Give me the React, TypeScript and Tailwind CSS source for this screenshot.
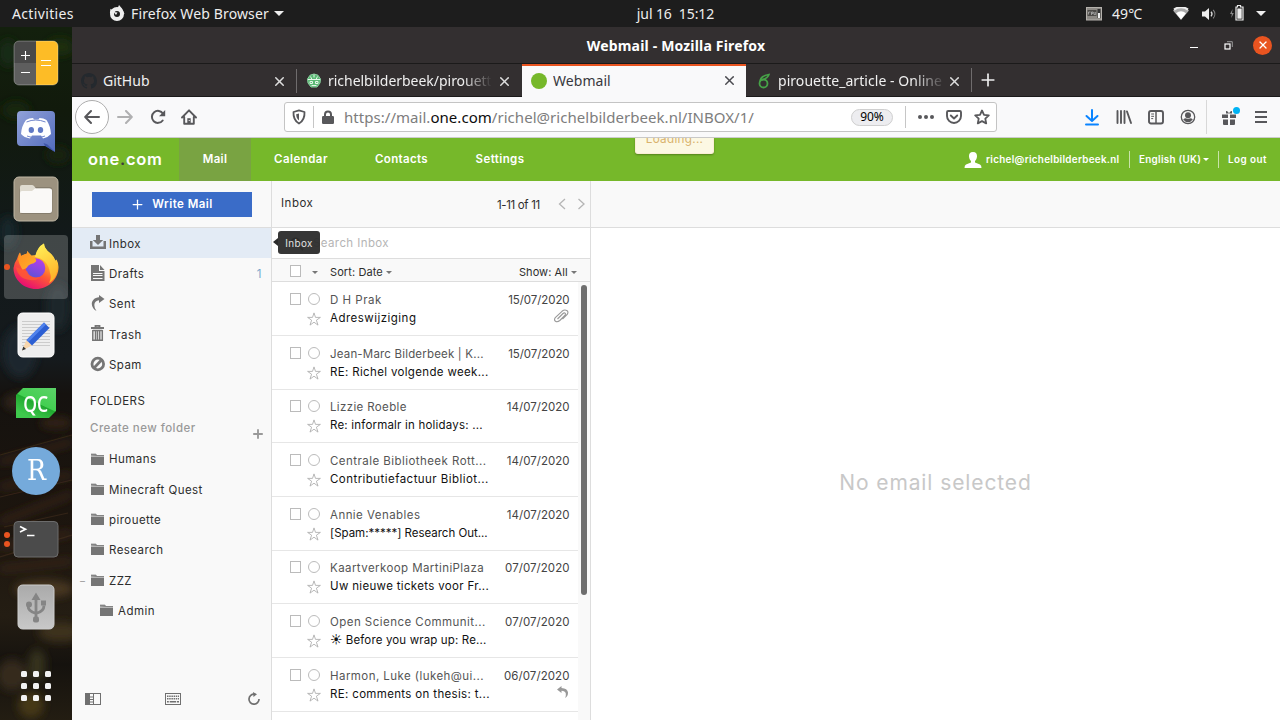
import React from "react";
import { Plus, X } from "lucide-react";

const ui = "font-['Noto_Sans','Open_Sans',sans-serif]";

function Caret({ className = "" }: { className?: string }) {
  return (
    <svg viewBox="0 0 10 5" className={className} fill="currentColor">
      <path d="M0 0h10L5 5z" />
    </svg>
  );
}

/* ---------- Desktop top bar ---------- */

function TopBar() {
  return (
    <div className={`flex h-[27px] shrink-0 items-center bg-[#1d1d1d] text-[14px] leading-[27px] text-[#eeeeee] ${ui}`}>
      <span className="ml-3 w-[97px] tracking-[0.35px]">Activities</span>
      <svg viewBox="0 0 16 16" className="-mt-[2px] size-4 shrink-0" fill="none">
        <circle cx="8" cy="9" r="5" stroke="#eee" strokeWidth="4" />
        <path d="M.9 8 1.500 3.800 3.300 5 5 3.800l1 2.700-3 3zM8.500 3.500 10 0l3 3.500L15.500 9l-4-1z" fill="#eee" />
        <path d="M4.500 7l4 .5L7 10z" fill="#eee" />
      </svg>
      <span className="ml-[6px] w-[143px] whitespace-nowrap tracking-[0.13px]">Firefox Web Browser</span>
      <Caret className="h-[5px] w-[10px] shrink-0" />
      <span className="ml-[352px] w-[79px] whitespace-pre text-center tracking-[-0.1px]">jul 16  15:12</span>
      <svg viewBox="0 0 16 14" className="ml-[371px] h-[14px] w-4 shrink-0">
        <rect x=".5" y=".5" width="15" height="12.5" fill="#8d8a85" stroke="#b5b2ad" />
        <rect x="1.5" y="3" width="9" height="6" fill="#4c4a47" />
        <path d="M2.5 7.5V5h2M5.500 8V5h1.600v1.400H5.500M8 5v2.600h1.700V5" stroke="#bbb" strokeWidth=".7" fill="none" />
        <rect x="11.5" y="2" width="3" height="9" fill="#333" />
        <rect x="12" y="6" width="2" height="5" fill="#eee" />
      </svg>
      <span className="ml-[10px] w-[33px] tracking-[0.1px]">49℃</span>
      <svg viewBox="0 0 16 13" className="ml-[28px] h-[13px] w-4 shrink-0">
        <path d="M0 3.6A12 12 0 0 1 16 3.6L8 13z" fill="#aaa" />
        <path d="M1 2.6A11.5 11.5 0 0 1 15 2.6" stroke="#eee" strokeWidth="2" fill="none" />
        <path d="M3 6.2a8 8 0 0 1 10 0L8 12.5z" fill="#fff" />
      </svg>
      <svg viewBox="0 0 16 14" className="ml-[12px] h-[14px] w-4 shrink-0" fill="none">
        <path d="M1 4.500h3L8 1v12L4 9.500H1z" fill="#eee" />
        <path d="M10 4.800a3.500 3.500 0 0 1 0 4.600" stroke="#ddd" strokeWidth="1.300" />
        <path d="M12.200 2.800a6.500 6.500 0 0 1 0 8.600" stroke="#888" strokeWidth="1.100" />
      </svg>
      <svg viewBox="0 0 14 16" className="-mt-[2px] ml-[13px] h-4 w-[14px] shrink-0">
        <path d="M2.600 4 0 9h1.800L1.300 13l2.500-5H2z" fill="#888" />
        <path d="M6 2h1.500V.5h3V2H13v13H6z" fill="none" stroke="#eee" strokeWidth="1.200" />
        <path d="M7.300 3.500h4.400v10.200H7.300z" fill="#eee" />
      </svg>
      <Caret className="ml-[12px] h-[5px] w-[10px] shrink-0" />
    </div>
  );
}

/* ---------- Dock ---------- */

function DockItem({ children, dots = 0, active = false }: { children: React.ReactNode; dots?: number; active?: boolean }) {
  return (
    <div className={`relative flex size-16 shrink-0 items-center justify-center rounded-[4px] ${active ? "bg-white/20" : ""}`}>
      {dots > 0 && (
        <div className="absolute top-0 left-0 flex h-full w-[6px] flex-col items-center justify-center gap-[3px]">
          {Array.from({ length: dots }, (_, i) => (
            <span key={i} className="size-[6px] rounded-full bg-[#e95420]" />
          ))}
        </div>
      )}
      {children}
    </div>
  );
}

function DockBackdrop() {
  return (
    <svg viewBox="0 0 72 693" className="absolute inset-0 h-full w-full" preserveAspectRatio="none">
      <defs>
        <linearGradient id="wood" x2="0" y2="1">
          <stop offset="0" stopColor="#13200d" />
          <stop offset=".12" stopColor="#111a0c" />
          <stop offset=".3" stopColor="#12191a" />
          <stop offset=".48" stopColor="#151a1d" />
          <stop offset=".53" stopColor="#15120f" />
          <stop offset=".7" stopColor="#1c150e" />
          <stop offset=".85" stopColor="#241d13" />
          <stop offset=".92" stopColor="#15120e" />
          <stop offset="1" stopColor="#231d12" />
        </linearGradient>
        <filter id="haze" x="-30%" y="-30%" width="160%" height="160%">
          <feGaussianBlur stdDeviation="4" />
        </filter>
      </defs>
      <rect width="72" height="693" fill="url(#wood)" />
      <g filter="url(#haze)">
        <ellipse cx="60" cy="20" rx="14" ry="9" fill="#1b2f11" />
        <ellipse cx="8" cy="26" rx="10" ry="14" fill="#182a12" />
        <ellipse cx="16" cy="83" rx="14" ry="9" fill="#172610" />
        <ellipse cx="58" cy="128" rx="12" ry="9" fill="#16200f" />
        <ellipse cx="8" cy="205" rx="9" ry="16" fill="#18272b" />
        <ellipse cx="58" cy="280" rx="12" ry="24" fill="#1a262b" />
        <ellipse cx="20" cy="325" rx="17" ry="26" fill="#1a272d" />
        <ellipse cx="22" cy="375" rx="18" ry="9" fill="#33261b" />
        <ellipse cx="56" cy="396" rx="16" ry="6" fill="#332318" />
        <path d="M0 435 72 415M0 460l72-12M0 495l72-28M0 520l72-14M0 542l72-8" stroke="#3b281a" strokeWidth="5" />
        <ellipse cx="44" cy="562" rx="30" ry="9" fill="#4a3720" />
        <ellipse cx="60" cy="605" rx="22" ry="10" fill="#3c301d" />
        <ellipse cx="12" cy="648" rx="15" ry="16" fill="#352c1d" />
        <ellipse cx="37" cy="638" rx="9" ry="16" fill="#36301e" />
        <ellipse cx="31" cy="678" rx="13" ry="13" fill="#453718" />
      </g>
      <path d="M0 428 72 408M0 470 72 453M4 500 68 486M0 530l72-22" stroke="#4b3320" strokeWidth="1.200" opacity=".5" />
    </svg>
  );
}

function Dock() {
  return (
    <div className="relative w-[72px] shrink-0 overflow-hidden">
      <DockBackdrop />
      <div className="relative flex flex-col items-center gap-1 pt-1">
        <DockItem>
          <svg viewBox="0 0 46 46" className="size-[46px]">
            <defs>
              <clipPath id="calc">
                <rect x="1" y="1" width="44" height="44" rx="5" />
              </clipPath>
            </defs>
            <g clipPath="url(#calc)">
              <path d="M0 0h23v23H0z" fill="#494949" />
              <path d="M0 23h23v23H0z" fill="#5e5e5e" />
              <path d="M23 0h23v46H23z" fill="#fdbc26" />
            </g>
            <rect x="1" y="1" width="44" height="44" rx="5" fill="none" stroke="#fff" strokeOpacity=".3" />
            <path d="M8 15.500h9M12.500 11v9M8 32.500h9M28 20.500h10M28 25.500h10" stroke="#fff" strokeWidth="1.100" />
          </svg>
        </DockItem>
        <DockItem>
          <svg viewBox="0 0 38 42" className="h-[42px] w-[38px]">
            <defs>
              <linearGradient id="disc" x2="1" y2="1">
                <stop stopColor="#91a2d8" />
                <stop offset="1" stopColor="#526bbd" />
              </linearGradient>
            </defs>
            <path d="M4 1h30a4 4 0 0 1 4 4v37l-9-6H4a4 4 0 0 1-4-4V5a4 4 0 0 1 4-4z" fill="url(#disc)" />
            <path d="M28 36l-1.500-3 4 1.500L38 42z" fill="#3e55a8" />
            <path d="M9 10q3-2 7-2l1 1.500h4.500L22.500 8q4 0 7 2 4 6 4.500 14-3 3.500-8 4.500l-2-3h-9l-2 3q-6-1-9-4.500Q4.500 16 9 10z" fill="#fff" />
            <ellipse cx="14.300" cy="20" rx="2.700" ry="2.900" fill="#6079c4" />
            <ellipse cx="23.500" cy="20" rx="2.700" ry="2.900" fill="#6079c4" />
            <path d="M9.500 12q9-4 19 0M10 26q9 3.500 18 0" fill="none" stroke="#7085cb" strokeWidth="1" />
          </svg>
        </DockItem>
        <DockItem>
          <svg viewBox="0 0 46 46" className="size-[46px]">
            <rect x="1" y="1" width="44" height="44" rx="5" fill="#9c927f" stroke="#c0b7a5" />
            <rect x="6.500" y="11" width="33" height="27" rx="3" fill="#776f60" opacity=".6" />
            <path d="M7 37V11q0-2 2-2h10q1 0 2 1l2 2.500h13q2 0 2 2V36z" fill="#dfdbd0" />
            <path d="M7 17q0-2 2-2h10l3-2.500h15q2 0 2 2v20q0 2.500-2.500 2.500h-27Q7 37 7 34.500z" fill="#faf9f7" />
          </svg>
        </DockItem>
        <DockItem dots={1} active>
          <svg viewBox="0 0 46 48" className="-mt-[2px] h-12 w-[46px]">
            <defs>
              <linearGradient id="fx1" x1=".8" x2=".25" y2="1">
                <stop offset=".05" stopColor="#fff04b" />
                <stop offset=".35" stopColor="#ffb22c" />
                <stop offset=".6" stopColor="#ff5c32" />
                <stop offset="1" stopColor="#e4047b" />
              </linearGradient>
              <linearGradient id="fx2" x1="0" x2="1" y2="1">
                <stop stopColor="#ff8c22" />
                <stop offset="1" stopColor="#ffb229" />
              </linearGradient>
              <linearGradient id="fx3" x1=".7" x2=".3" y2="1">
                <stop stopColor="#b83dea" />
                <stop offset="1" stopColor="#5d52d8" />
              </linearGradient>
              <linearGradient id="fx4" x2=".3" y2="1">
                <stop stopColor="#fff35a" />
                <stop offset="1" stopColor="#ffb52b" />
              </linearGradient>
            </defs>
            <path d="M4 17Q5.500 12 7 10.500l1 3.500q3-2 6-2.500V9l4.500 4.500L23 13Q25 5 31 1.500q0 5 6 9.500 4 3 5 8l1.500-1.500Q45.500 21 45.500 25c0 12-10 22-22.500 22S.5 37.500.5 26Q1 21 4 17z" fill="url(#fx1)" />
            <circle cx="22.500" cy="26" r="9.800" fill="url(#fx3)" />
            <path d="M22 15Q24 5 31 1.500q0 5 6 9.500 8 7 7 18-1 8-8 12 3-5 1-10Q35 17 22 15z" fill="url(#fx4)" />
            <path d="M5 17l2-6.500L8 14l6-2.500V9l4.500 5.500Q24 16 23 19.500q-2 2-5 2.500-3 .8-4.500 4l-4 2-3-6z" fill="url(#fx2)" />
            <path d="M3 25q2 12 14 13 7 1 10-3-10 2-13-6z" fill="#ff5a32" opacity=".8" />
          </svg>
        </DockItem>
        <DockItem>
          <svg viewBox="0 0 38 46" className="h-[46px] w-[38px]">
            <rect x="1" y="1" width="36" height="44" rx="4.500" fill="#eee" stroke="#fff" />
            <path d="M5 9.500h28M5 12.500h28M5 15.500h28M5 18.500h28M5 21.500h28M5 24.500h28M5 27.500h28M5 30.500h28M5 33.500h28" stroke="#ccc" strokeWidth="1" />
            <path d="M9.500 28l5.500 5.500-10 5z" fill="#f8d6ac" />
            <path d="M5 38.500l1.300-4 2.700 2.500z" fill="#333" />
            <path d="M9.500 28 27 10.500l5.500 5.500L15 33.500z" fill="#2c5fd3" />
            <path d="M9.500 28 27 10.500l2 2L11.500 30z" fill="#4f82ec" />
          </svg>
        </DockItem>
        <DockItem>
          <div className="flex h-[30px] w-[40px] items-center justify-center bg-[linear-gradient(205deg,#5cd268_0%,#43cf51_48%,#20a92f_50%,#3fc94d_85%)] text-[22px] leading-none text-white [clip-path:polygon(7px_0,100%_0,100%_23px,33px_100%,0_100%,0_7px)] [font-family:'Open_Sans',sans-serif] font-semibold">
            <span className="scale-x-80">QC</span>
          </div>
        </DockItem>
        <DockItem>
          <div className="flex size-12 items-center justify-center rounded-full bg-[#75aadb] pl-[2px] text-[28px] leading-none text-white [font-family:'DejaVu_Serif',serif]">
            <span className="scale-x-90">R</span>
          </div>
        </DockItem>
        <DockItem dots={2}>
          <svg viewBox="0 0 46 38" className="h-[38px] w-[46px]">
            <rect x="1" y="1.500" width="44" height="35.500" rx="4" fill="#4b4b4b" stroke="#6c6c6c" />
            <path d="M7 6.500l5.500 2.700L7 12" fill="none" stroke="#fff" strokeWidth="1.700" />
            <path d="M14 15.500h7.500" stroke="#fff" strokeWidth="1.500" />
          </svg>
        </DockItem>
        <DockItem>
          <svg viewBox="0 0 38 46" className="h-[46px] w-[38px]">
            <defs>
              <linearGradient id="usb" x2="0" y2="1">
                <stop stopColor="#aaa" />
                <stop offset="1" stopColor="#c8c8c8" />
              </linearGradient>
            </defs>
            <rect x="1" y="1" width="36" height="44" rx="4.500" fill="url(#usb)" stroke="#ccc" />
            <g stroke="#858585" strokeWidth="2.800" fill="none">
              <path d="M19 13v22M19 29.500q-8-2-8-8M19 29.500q8-2 8-8" />
            </g>
            <g fill="#858585">
              <path d="M14.500 16 19 8.500l4.500 7.500zM24 16.500h5v5h-5z" />
              <circle cx="12" cy="20.500" r="3" />
              <rect x="16" y="32.500" width="6" height="6" rx="2" />
            </g>
          </svg>
        </DockItem>
      </div>
      <div className="relative mt-[32px] ml-[21px] grid w-[30px] grid-cols-3 gap-[6px]">
        {Array.from({ length: 9 }, (_, i) => (
          <span key={i} className="size-[6px] rounded-[1.500px] bg-[#f2f2f2]" />
        ))}
      </div>
    </div>
  );
}

/* ---------- Browser chrome ---------- */

function TitleBar() {
  return (
    <div className={`flex h-[37px] items-center border-b border-[#1b1a1a] bg-[#332f30] ${ui}`}>
      <span className="ml-[504px] w-[200px] text-center text-[14px] font-bold tracking-[0.17px] whitespace-nowrap text-white">Webmail - Mozilla Firefox</span>
      <span className="mt-1 ml-[414px] h-px w-2 bg-white" />
      <svg viewBox="0 0 9 9" className="ml-[26px] size-[9px]" fill="none">
        <rect x="1" y="3" width="5" height="5" stroke="#fff" strokeWidth="1.200" />
        <path d="M3 .7h5.300V6" stroke="#999" />
      </svg>
      <span className="ml-[20px] flex size-[19px] items-center justify-center rounded-full bg-[#e95420] text-white">
        <X size={12} strokeWidth={2.600} />
      </span>
    </div>
  );
}

function Tab({ icon, title, className, textClass = "", active = false }: { icon: React.ReactNode; title: string; className: string; textClass?: string; active?: boolean }) {
  return (
    <div className={`flex items-center ${className} ${active ? "border-t-2 border-[#e95420] bg-[#f9f9fa] pb-[2px] text-[#38383d]" : "text-[#f0f0f0]"}`}>
      <span className="flex size-4 shrink-0 items-center justify-center">{icon}</span>
      <span className={`ml-[6px] w-[164px] shrink-0 overflow-hidden text-[14px] leading-5 whitespace-nowrap ${textClass}`}>{title}</span>
      <X size={15} strokeWidth={2.400} className={`ml-[5px] shrink-0 ${active ? "text-[#4a4a4f]" : "text-[#dedede]"}`} />
    </div>
  );
}

function Tabs() {
  return (
    <div className={`flex h-[33px] bg-[#332f30] ${ui}`}>
      <div className="flex flex-1 [&>*]:h-full">
        <Tab
          className="w-[224px] border-b border-[#1b1a1a] pt-[2px] pl-[9px]"
          title="GitHub"
          textClass="tracking-[0px]"
          icon={
            <svg viewBox="0 0 16 16" className="size-4" fill="#24292e">
              <path d="M8 0C3.580 0 0 3.580 0 8c0 3.540 2.290 6.530 5.470 7.590.4.070.55-.17.55-.38 0-.19-.01-.82-.01-1.490-2.010.37-2.530-.49-2.690-.94-.09-.23-.48-.94-.82-1.130-.28-.15-.68-.52-.01-.53.63-.01 1.080.58 1.230.82.72 1.210 1.870.87 2.330.66.07-.52.28-.87.51-1.070-1.780-.2-3.640-.89-3.640-3.950 0-.87.31-1.590.82-2.150-.08-.2-.36-1.020.08-2.120 0 0 .67-.21 2.200.82a7.500 7.500 0 0 1 4 0c1.530-1.040 2.200-.82 2.200-.82.44 1.100.16 1.920.08 2.120.51.56.82 1.270.82 2.150 0 3.070-1.870 3.750-3.650 3.950.29.25.54.73.54 1.480 0 1.070-.01 1.930-.01 2.200 0 .21.15.46.55.38A8 8 0 0 0 16 8c0-4.420-3.580-8-8-8z" />
            </svg>
          }
        />
        <Tab
          className="w-[226px] border-b border-[#1b1a1a] pt-[2px] pl-[10px] before:-ml-[10px] before:mr-[9px] before:h-[24px] before:w-px before:bg-[#6f6c6d]"
          title="richelbilderbeek/pirouette"
          textClass="tracking-[-0.03px] [mask-image:linear-gradient(to_right,black_135px,transparent_164px)]"
          icon={
            <svg viewBox="0 0 16 16" className="size-4" fill="none">
              <path d="M4 2.200 8 1l4 1.200L14.500 6 14 10l-3 4H5l-3-4L1.500 6z" fill="#5bb974" stroke="#8bd09f" />
              <path d="M2 6.500h12M4.500 3.500 6 6.500M11.500 3.500 10 6.500M8 1.500v3M4 8.500h2.500v2H4zM9.500 8.500H12v2H9.500zM5.500 12.500h5" stroke="#e5f6ea" />
            </svg>
          }
        />
        <Tab active className="w-[224px] pl-[9px]" title="Webmail" textClass="tracking-[0.05px]" icon={<span className="size-4 rounded-full bg-[#76b82a]" />} />
        <Tab
          className="w-[224px] border-b border-[#1b1a1a] pt-[2px] pl-[10px]"
          title="pirouette_article - Online"
          textClass="tracking-[0.05px] [mask-image:linear-gradient(to_right,black_135px,transparent_168px)]"
          icon={
            <svg viewBox="0 0 16 16" className="size-4" fill="none" stroke="#46a247">
              <circle cx="7.500" cy="10.500" r="4" strokeWidth="1.800" />
              <path d="M4 9q0-6 9-7.500Q12 5 6 7" strokeWidth="1.600" />
            </svg>
          }
        />
        <div className="flex flex-1 items-center border-b border-[#1b1a1a]">
          <span className="ml-[1px] h-[24px] w-px bg-[#6f6c6d]" />
          <Plus size={20} strokeWidth={2} className="ml-[6px] text-[#eee]" />
        </div>
      </div>
    </div>
  );
}

function AddressBar() {
  return (
    <div className="flex h-[30px] w-[713px] items-center rounded-[3px] border border-[#c4c4c4] bg-white text-[#58585b]">
      <svg viewBox="0 0 16 16" className="ml-[6px] size-4 shrink-0" fill="none" stroke="currentColor" strokeWidth="1.800">
        <path d="M8 1.400 13.500 3q.5 8-5.500 11.600Q2 11 2.500 3z" strokeLinejoin="round" />
        <path d="M8 4.500v7Q5.200 9.500 5.200 5.300z" fill="currentColor" stroke="none" />
      </svg>
      <span className="ml-[6px] h-[22px] w-px bg-[#c6c6c6]" />
      <svg viewBox="0 0 12 14" className="ml-[8px] h-[14px] w-3 shrink-0">
        <path d="M3 7V4.500a3 3 0 0 1 6 0V7" stroke="currentColor" strokeWidth="2" fill="none" />
        <rect y="6" width="12" height="8" rx="1.200" fill="currentColor" />
      </svg>
      <span className="ml-[10px] w-[507px] text-[15px] tracking-[0.04px] whitespace-nowrap text-[#7d7d7d]">
        https://mail.<span className="text-[#0c0c0d]">one.com</span>/richel@richelbilderbeek.nl/INBOX/1/
      </span>
      <span className="flex h-[17px] w-[42px] items-center justify-center rounded-full border border-[#cfcfcf] bg-[#ededf0] text-[12px] tracking-[-0.1px] text-black">90%</span>
      <span className="ml-[12px] h-[22px] w-px bg-[#c6c6c6]" />
      <svg viewBox="0 0 16 4" className="ml-[12px] h-1 w-4 shrink-0" fill="currentColor">
        <circle cx="2" cy="2" r="2" />
        <circle cx="8" cy="2" r="2" />
        <circle cx="14" cy="2" r="2" />
      </svg>
      <svg viewBox="0 0 16 16" className="ml-[12px] size-4 shrink-0" fill="none" stroke="currentColor" strokeWidth="1.900" strokeLinecap="round" strokeLinejoin="round">
        <path d="M2.200 2h11.600q1.200 0 1.200 1.200V7A7 7 0 0 1 1 7V3.200Q1 2 2.200 2z" />
        <path d="M4.800 6.500 8 9.500l3.200-3" />
      </svg>
      <svg viewBox="0 0 16 16" className="ml-[12px] size-4 shrink-0" fill="none" stroke="currentColor" strokeWidth="1.800" strokeLinejoin="round">
        <path d="m8 1.500 2 4.300 4.800.6-3.500 3.300.9 4.700L8 12.100l-4.200 2.300.9-4.700L1.200 6.400 6 5.800z" />
      </svg>
    </div>
  );
}

function Toolbar() {
  return (
    <div className={`flex h-[41px] items-center border-b border-[#cccccc] bg-[#f9f9fa] text-[#58585b] ${ui}`}>
      <span className="ml-[3px] flex size-[34px] items-center justify-center rounded-full border border-[#adadad] bg-white">
        <svg viewBox="0 0 16 16" className="size-4" fill="none" stroke="currentColor" strokeWidth="2" strokeLinecap="round" strokeLinejoin="round">
          <path d="M15 8H1.500M7 2 1.200 8 7 14" />
        </svg>
      </span>
      <svg viewBox="0 0 16 16" className="ml-[8px] size-4 opacity-45" fill="none" stroke="currentColor" strokeWidth="2" strokeLinecap="round" strokeLinejoin="round">
        <path d="M1 8h13.500M9 2l5.800 6L9 14" />
      </svg>
      <svg viewBox="0 0 16 16" className="ml-[17px] size-4" fill="none" stroke="currentColor" strokeWidth="2" strokeLinecap="round">
        <path d="M12.700 11.500A6 6 0 1 1 13 4.700" />
        <path d="M15.200 1v6.200H9z" fill="currentColor" stroke="none" />
      </svg>
      <svg viewBox="0 0 16 16" className="ml-[15px] size-4" fill="none" stroke="currentColor" strokeWidth="1.900" strokeLinecap="round" strokeLinejoin="round">
        <path d="M1 8.500 8 1.300l7 7.200M3.200 8v6.800h9.600V8" />
        <path d="M6.300 9.200h3.400v5.600H6.300z" fill="currentColor" stroke="none" />
        <path d="M8.200 11.500h.1" stroke="#f9f9fa" strokeWidth="1.200" />
      </svg>
      <div className="ml-[87px]">
        <AddressBar />
      </div>
      <svg viewBox="0 0 16 18" className="ml-[87px] h-[18px] w-4" fill="none" stroke="#0a84ff" strokeWidth="2" strokeLinecap="round" strokeLinejoin="round">
        <path d="M8 2v10.500M2.500 8 8 13l5.500-5M2 16.500h12" />
      </svg>
      <svg viewBox="0 0 16 16" className="ml-[16px] size-4" stroke="currentColor" strokeWidth="1.900" strokeLinecap="round">
        <path d="M1.500 2v12M5 2v12M8.500 2v12M11 2.500l4 11.500" />
      </svg>
      <svg viewBox="0 0 16 16" className="ml-[16px] size-4" fill="none" stroke="currentColor" strokeWidth="1.900">
        <rect x="1" y="2" width="14" height="12.500" rx="2" />
        <path d="M8 2v12" strokeWidth="1.500" />
        <path d="M3.200 5h2.800M3.200 7.300h2.800M3.200 9.600h2" strokeWidth="1" />
      </svg>
      <svg viewBox="0 0 16 16" className="ml-[16px] size-4" fill="none" stroke="currentColor">
        <circle cx="8" cy="8" r="6.700" strokeWidth="1.300" />
        <circle cx="8" cy="6.200" r="3" fill="currentColor" stroke="none" />
        <path d="M3.200 10.500q1-1.200 2.800-1.200 2 1 4 0 1.800 0 2.800 1.200-2 2.700-4.800 2.700T3.200 10.500z" fill="currentColor" stroke="none" />
      </svg>
      <span className="ml-[10px] h-[34px] w-px bg-[#d8d8d8]" />
      <span className="relative ml-[14px] size-4">
        <svg viewBox="0 0 16 16" className="size-4" fill="currentColor">
          <path d="M1 5.500h6V9H1zM9 5.500h6V9H9zM2 10.500h5V16H3q-1 0-1-1zM9 10.500h5V15q0 1-1 1H9z" />
          <path d="M5 2q2-.5 3 2.500Q9 1.500 11 2v2.500H5z" />
        </svg>
        <span className="absolute -top-[2px] left-[12px] size-[7px] rounded-full bg-[#00b3f4]" />
      </span>
      <svg viewBox="0 0 14 12" className="ml-[17px] h-3 w-[14px]" stroke="currentColor" strokeWidth="2">
        <path d="M1 1h12M1 6h12M1 11h12" />
      </svg>
    </div>
  );
}

/* ---------- Webmail ---------- */

function Header() {
  return (
    <header className="relative flex h-[43px] shrink-0 items-center bg-[#76b82a] text-[11.500px] font-semibold text-white">
      <span className="ml-[16px] w-[91px] text-[16.500px] leading-none font-semibold tracking-[0.700px]">
        one<span className="text-[#3c3c3b]">.</span>com
      </span>
      <span className="flex h-full w-[72px] items-center justify-center bg-[#79a342] pt-px tracking-[0.300px]">Mail</span>
      <span className="w-[100px] pt-px text-center tracking-[0.450px]">Calendar</span>
      <span className="w-[101px] pt-px text-center tracking-[0.350px]">Contacts</span>
      <span className="w-[96px] pt-px text-center tracking-[0.400px]">Settings</span>
      <div className="ml-auto flex items-center text-[9.900px]">
        <svg viewBox="0 0 18 16" className="h-4 w-[18px]" fill="white">
          <path d="M9 0c3 0 4.200 2 4 4.500-.2 2-1 3.500-2 4.500v1.500l5 2q1.500.7 1.500 3.500h-17q0-2.800 1.500-3.500l5-2V9C6 8 5.200 6.500 5 4.500 4.800 2 6 0 9 0z" />
        </svg>
        <span className="ml-[4px] w-[134px] tracking-[0.280px] whitespace-nowrap">richel@richelbilderbeek.nl</span>
        <span className="ml-[9px] h-[17px] w-px bg-white/60" />
        <span className="ml-[9px] w-[62px] tracking-[0.280px] whitespace-nowrap">English (UK)</span>
        <Caret className="ml-[2px] h-[3px] w-[6px]" />
        <span className="ml-[9px] h-[17px] w-px bg-white/60" />
        <span className="mr-[13px] ml-[9px] w-[39px] tracking-[0.430px] whitespace-nowrap">Log out</span>
      </div>
      <div className="absolute top-0 left-[563px] flex h-[16px] w-[79px] justify-center overflow-hidden rounded-b-[3px] border border-t-0 border-[#fbeed5] bg-[#fcf8e3] text-[11.700px] leading-[3px] font-normal tracking-[0.300px] text-[#d9b26c] shadow-[0_1px_2px_rgba(0,0,0,.3)]">
        <span>Loading...</span>
      </div>
    </header>
  );
}

const mailboxes = [
  {
    name: "Inbox",
    icon: (
      <svg viewBox="0 0 16 16" className="size-4" fill="currentColor">
        <path d="M6 1h4v5h3.200L8 11 2.800 6H6zM0 7h2.500v5.500h11V7H16v8H0z" />
      </svg>
    ),
  },
  {
    name: "Drafts",
    count: 1,
    icon: (
      <svg viewBox="0 0 16 16" className="size-4">
        <path d="M1 0h8v6h5.500v10H1z" fill="currentColor" />
        <path d="M10 0l4.500 5H10z" fill="currentColor" />
        <path d="M3 8.500h9.500M3 10.500h9.500M3 13.500h9.500" stroke="#f9f9f9" />
      </svg>
    ),
  },
  {
    name: "Sent",
    icon: (
      <svg viewBox="0 0 16 16" className="size-4" fill="currentColor">
        <path d="M9 0v2.200C4.500 2.500 1.800 5.500 1.800 9q.2 4.500 4.700 7-2.300-3-2.200-6 .3-4.300 4.700-4.700V8l5.500-4z" />
      </svg>
    ),
  },
  {
    name: "Trash",
    icon: (
      <svg viewBox="0 0 16 16" className="size-4" fill="none" stroke="currentColor" strokeWidth="1.500">
        <path d="M5.500 2V.8h4V2M1 3h13" strokeWidth="1.800" />
        <path d="M2.800 5v10.200h9.500V5M2.800 5.500h9.500M5.500 6v9M7.500 6v9M9.700 6v9" />
      </svg>
    ),
  },
  {
    name: "Spam",
    icon: (
      <svg viewBox="0 0 16 16" className="size-4" fill="none" stroke="currentColor" strokeWidth="2.800">
        <circle cx="7.800" cy="8" r="5.800" />
        <path d="M4 12 11.500 4" />
      </svg>
    ),
  },
];

function FolderIcon() {
  return (
    <svg viewBox="0 0 13 12" className="h-3 w-[13px] shrink-0">
      <path d="M0 4h13v8H0z" fill="#757575" />
      <path d="M0 .8h5l1 1.200h7v2H0z" fill="#b5b5b5" />
      <path d="M0 2.200V.8h4.800l1 1.200H13v.9H5.500z" fill="#858585" />
    </svg>
  );
}

function Sidebar() {
  return (
    <aside className="flex w-[200px] shrink-0 flex-col border-r border-[#dddddd] bg-[#f9f9f9] text-[11.500px] tracking-[0.450px] text-[#2d2d2d]">
      <div className="flex h-[47px] shrink-0 items-center justify-center border-b border-[#dddddd]">
        <button className="flex h-[25px] w-[160px] items-center justify-center bg-[#3a6cc8] pt-px font-semibold text-white">
          <Plus size={15} strokeWidth={2} className="mr-[7px]" />
          <span className="w-[62px] whitespace-nowrap">Write Mail</span>
        </button>
      </div>
      <ul>
        {mailboxes.map((m, i) => (
          <li key={m.name} className={`flex h-[30.400px] items-center pt-[2px] pr-[9px] pl-[18px] ${i === 0 ? "bg-[#e3ebf5]" : ""}`}>
            <span className="-mt-[4px] mr-[3px] text-[#757575]">{m.icon}</span>
            <span>{m.name}</span>
            {m.count && <span className="ml-auto text-[#7aa7cc]">{m.count}</span>}
          </li>
        ))}
      </ul>
      <div className="mt-[12px] pl-[18px] leading-[18px]">FOLDERS</div>
      <div className="mt-[10px] flex h-[18px] items-center justify-between pr-[6px] pl-[18px] font-medium text-[#999999]">
        <span>Create new folder</span>
        <Plus size={14} strokeWidth={3.200} className="mt-[10px]" />
      </div>
      <ul className="mt-[7px]">
        {["Humans", "Minecraft Quest", "pirouette", "Research", "ZZZ", "Admin"].map((name) => (
          <li key={name} className={`flex h-[30.300px] items-center ${name === "Admin" ? "pl-[28px]" : "pl-[8px]"}`}>
            {name !== "Admin" && <span className="w-[11px] text-[10px] leading-none text-[#999]">{name === "ZZZ" ? "–" : ""}</span>}
            <span className="-mt-[3px] mr-[5px]">
              <FolderIcon />
            </span>
            <span>{name}</span>
          </li>
        ))}
      </ul>
      <div className="mt-auto mb-[15px] flex items-center pl-[13px] text-[#707070]">
        <svg viewBox="0 0 16 12" className="h-3 w-4" fill="none" stroke="currentColor">
          <rect x=".5" y=".5" width="15" height="11" />
          <path d="M.5.5h4v11h-4z" fill="currentColor" />
          <path d="M8.500 1v10M4.500 4h4M4.500 6.500h4M4.500 9h4" />
        </svg>
        <svg viewBox="0 0 16 12" className="ml-[64px] h-3 w-4" fill="none" stroke="currentColor">
          <rect x=".5" y=".5" width="15" height="11" />
          <path d="M2 3.300h12M2 5.800h12" strokeDasharray="1.500 .7" strokeWidth="1.400" />
          <path d="M2 8.700h1.800M4.700 8.700h6.500M12 8.700h2" strokeWidth="1.400" />
        </svg>
        <svg viewBox="0 0 12 13" className="ml-[67px] h-[13px] w-3" fill="none" stroke="currentColor" strokeWidth="1.700">
          <path d="M11 7A5 5 0 1 1 6.500 2.200" />
          <path d="M5 0l4 2.200L5.500 5z" fill="currentColor" stroke="none" />
        </svg>
      </div>
    </aside>
  );
}

type Mail = {
  from: string;
  fromClass: string;
  subject: string;
  subjectClass: string;
  date: string;
  dateClass: string;
  mark?: "attachment" | "reply";
};

const mails: Mail[] = [
  { from: "D H Prak", fromClass: "tracking-[0.500px]", subject: "Adreswijziging", subjectClass: "tracking-[0.480px]", date: "15/07/2020", dateClass: "tracking-[-0.080px]", mark: "attachment" },
  { from: "Jean-Marc Bilderbeek | K...", fromClass: "tracking-[0.180px]", subject: "RE: Richel volgende week...", subjectClass: "tracking-[0.340px]", date: "15/07/2020", dateClass: "tracking-[-0.080px]" },
  { from: "Lizzie Roeble", fromClass: "tracking-[0.360px]", subject: "Re: informalr in holidays: ...", subjectClass: "tracking-[0.200px]", date: "14/07/2020", dateClass: "tracking-[0.020px]" },
  { from: "Centrale Bibliotheek Rott...", fromClass: "tracking-[0.450px]", subject: "Contributiefactuur Bibliot...", subjectClass: "tracking-[0.450px]", date: "14/07/2020", dateClass: "tracking-[0.020px]" },
  { from: "Annie Venables", fromClass: "tracking-[0.450px]", subject: "[Spam:*****] Research Out...", subjectClass: "tracking-[-0.020px]", date: "14/07/2020", dateClass: "tracking-[0.020px]" },
  { from: "Kaartverkoop MartiniPlaza", fromClass: "tracking-[0.420px]", subject: "Uw nieuwe tickets voor Fr...", subjectClass: "tracking-[0.330px]", date: "07/07/2020", dateClass: "tracking-[0.050px]" },
  { from: "Open Science Communit...", fromClass: "tracking-[0.460px]", subject: "☀ Before you wrap up: Re...", subjectClass: "tracking-[0.140px]", date: "07/07/2020", dateClass: "tracking-[0.050px]" },
  { from: "Harmon, Luke (lukeh@ui...", fromClass: "tracking-[0.440px]", subject: "RE: comments on thesis: t...", subjectClass: "tracking-[0.340px]", date: "06/07/2020", dateClass: "tracking-[0.080px]", mark: "reply" },
];

function MailRow({ mail }: { mail: Mail }) {
  return (
    <li className="flex h-[53.700px] shrink-0 border-b border-[#e6e6e6] bg-white pt-[8.700px] pl-[18px] leading-[18px]">
      <span className="mt-[2px] h-3 w-[11px] border border-[#bbbbbb] bg-white" />
      <span className="ml-[6px] flex w-[14px] flex-col items-center">
        <span className="mt-[2px] size-3 rounded-full border border-[#bbbbbb]" />
        <svg viewBox="0 0 14 14" className="mt-[7px] size-[14px] shrink-0" fill="none" stroke="#b0b0b0" strokeWidth=".9">
          <path d="m7 .9 1.500 4.500h4.900L9.400 8.200l1.600 4.900L7 10.200l-4 2.900 1.600-4.900L.6 5.400h4.900z" />
        </svg>
      </span>
      <div className="ml-[9px] min-w-0 flex-1 whitespace-nowrap">
        <div className={`text-[#555555] ${mail.fromClass}`}>{mail.from}</div>
        <div className={`text-[#111111] ${mail.subjectClass}`}>{mail.subject}</div>
      </div>
      <div className="mr-[8.500px] flex flex-col items-end text-[#444444]">
        <span className={mail.dateClass}>{mail.date}</span>
        {mail.mark === "attachment" && (
          <svg viewBox="0 0 16 14" className="mr-px h-[14px] w-4" fill="none" stroke="#999" strokeWidth="1.100">
            <path d="M4.500 10 10 4.500q1.500-1.200 2.200-.2t-.4 2.200l-5 5q-2.500 2-4.300.8T2.300 8.500L9 2.300q2.500-2 4.700-.8t.5 4L9.500 10" />
          </svg>
        )}
        {mail.mark === "reply" && (
          <svg viewBox="0 0 12 12" className="mt-[1px] mr-[1px] size-3" fill="#999">
            <path d="M4.500 0v2q6 .3 6.500 4.500Q11.200 10 8 12q1.200-2.500.8-4.500Q8 4.900 4.500 4.800V7L0 3.500z" />
          </svg>
        )}
      </div>
    </li>
  );
}

function MailList() {
  return (
    <section className="relative flex w-[319px] shrink-0 flex-col border-r border-[#dddddd] bg-[#f9f9f9] text-[11.500px] text-[#2d2d2d]">
      <div className="flex h-[47px] shrink-0 items-center border-b border-[#dddddd] pl-[9px]">
        <span className="w-[216px] tracking-[0.500px]">Inbox</span>
        <span className="mt-[3px] w-[60px] tracking-[-0.350px] whitespace-nowrap">1-11 of 11</span>
        <svg viewBox="0 0 28 12" className="h-3 w-7" fill="none" stroke="#b5b5b5" strokeWidth="1.300">
          <path d="M8 1 2.500 6 8 11M21.500 1 27 6l-5.500 5" />
        </svg>
      </div>
      <div className="flex h-[31px] shrink-0 items-center border-b border-[#dddddd] bg-white pt-[2px] pl-[18px] tracking-[0.400px] text-[#b5b5b5]">
        <svg viewBox="0 0 14 14" className="size-[14px]" fill="none" stroke="#333" strokeWidth="2">
          <circle cx="5.500" cy="5.500" r="4" />
          <path d="m8.500 8.500 4.500 4.500" />
        </svg>
        <span className="ml-[9px]">Search Inbox</span>
      </div>
      <div className="flex h-[23px] shrink-0 items-center border-b border-[#dddddd] pt-[4px] pl-[18px] text-[11px]">
        <span className="-mt-[2px] h-3 w-[11px] shrink-0 border border-[#bbbbbb] bg-white" />
        <Caret className="ml-[11px] h-[3px] w-[6px] text-[#777]" />
        <span className="ml-[12px] w-[53px] tracking-[0.100px] whitespace-nowrap">Sort: Date</span>
        <Caret className="ml-[3px] h-[3px] w-[6px] text-[#777]" />
        <span className="ml-auto w-[50px] tracking-[0.050px] whitespace-nowrap">Show: All</span>
        <Caret className="mr-[13px] ml-[2px] h-[3px] w-[6px] text-[#777]" />
      </div>
      <div className="flex min-h-0 flex-1 overflow-hidden">
        <ul className="flex w-[306px] flex-col pt-[0.300px]">
          {mails.map((m) => (
            <MailRow key={m.from} mail={m} />
          ))}
          <li className="min-h-2 flex-1 bg-white" />
        </ul>
        <div className="ml-[3px] mt-[3px] h-[310px] w-[6px] rounded-full bg-[#6e6e6e]" />
      </div>
      <div className="absolute top-[50px] left-[6px] flex h-[23px] w-[42px] items-center justify-center rounded-[3px] bg-[#2b2b2b]/95 pt-[2px] text-[9.900px] tracking-[0.400px] text-[#e0e0e0]">
        Inbox
        <svg viewBox="0 0 5 8" className="absolute top-[7px] -left-[5px] h-2 w-[5px]" fill="#2b2b2b">
          <path d="M5 0v8L0 4z" />
        </svg>
      </div>
    </section>
  );
}

export default function App() {
  return (
    <div className="flex h-[720px] w-[1280px] flex-col overflow-hidden bg-white">
      <TopBar />
      <div className="flex min-h-0 flex-1">
        <Dock />
        <div className="flex w-[1208px] flex-col">
          <TitleBar />
          <Tabs />
          <Toolbar />
          <div className="flex min-h-0 flex-1 flex-col font-['Inter',sans-serif]">
            <Header />
            <main className="flex min-h-0 flex-1">
              <Sidebar />
              <MailList />
              <section className="flex flex-1 flex-col">
                <div className="h-[47px] shrink-0 border-b border-[#dddddd] bg-[#f9f9f9]" />
                <div className="flex flex-1 items-center justify-center pt-[17px] text-[21px] tracking-[0.900px] text-[#c8c8c8]">No email selected</div>
              </section>
            </main>
          </div>
        </div>
      </div>
    </div>
  );
}
